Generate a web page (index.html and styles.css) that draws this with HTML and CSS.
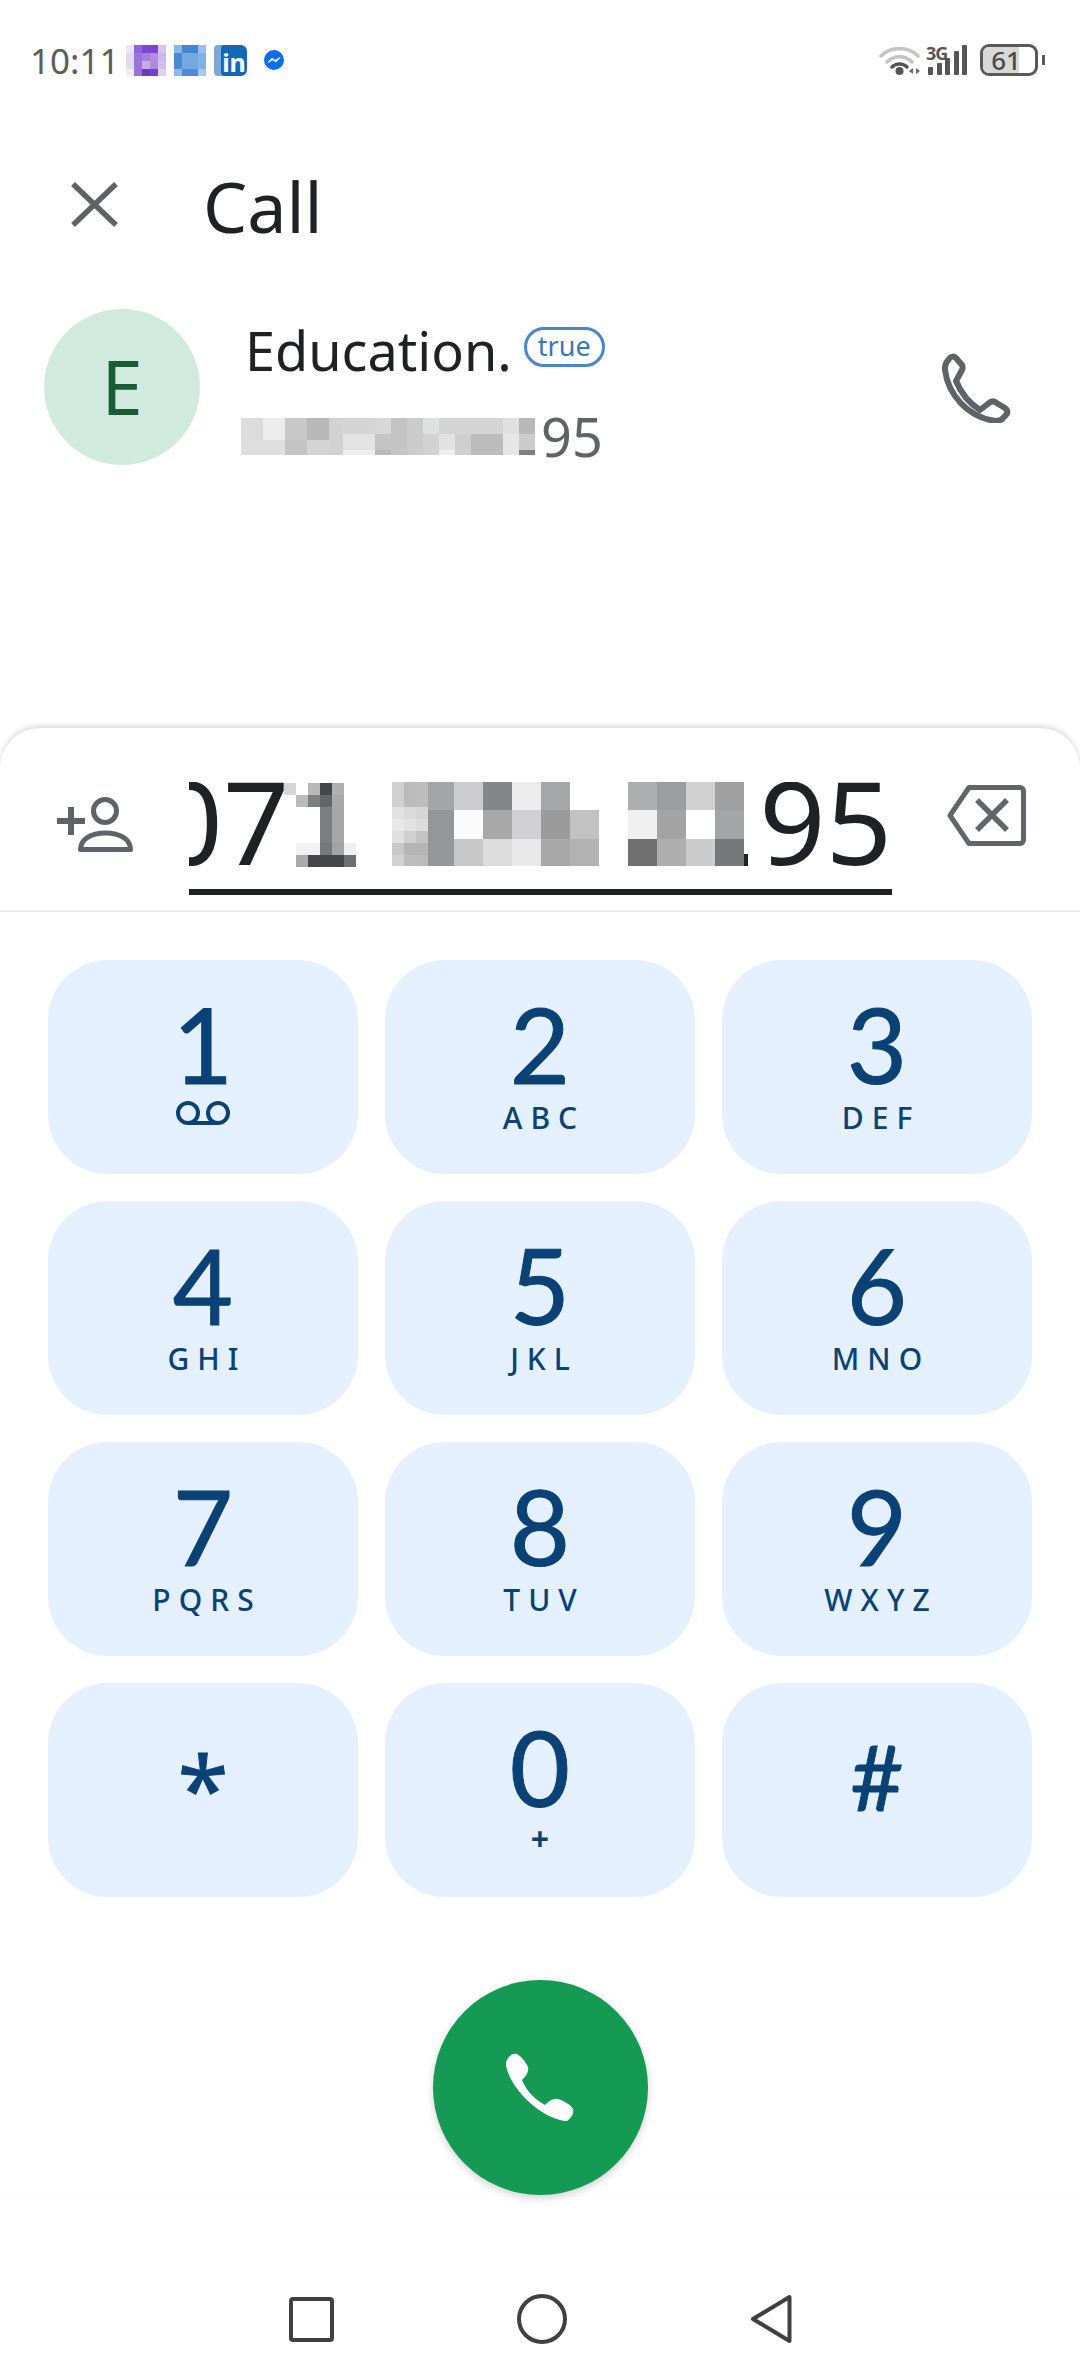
FILE: index.html
```html
<!DOCTYPE html>
<html lang="en">
<head>
  <meta charset="UTF-8" />
  <meta name="viewport" content="width=device-width, initial-scale=1.0" />
  <title>Call</title>
  <link rel="stylesheet" href="styles.css">
</head>
<body>
  <div class="status-bar">
    <span class="time">10:11</span>
    <svg class="notif" width="40" height="31" viewBox="0 0 40 31" shape-rendering="crispEdges">
      <rect x="0" y="0" width="8" height="8" fill="#ece6f6"/><rect x="8" y="0" width="8" height="8" fill="#8e62e0"/><rect x="16" y="0" width="16" height="8" fill="#7c45d8"/><rect x="32" y="0" width="8" height="8" fill="#d8c6ee"/>
      <rect x="0" y="8" width="8" height="8" fill="#e2d8f2"/><rect x="8" y="8" width="8" height="8" fill="#9a72dc"/><rect x="16" y="8" width="8" height="8" fill="#a37fdc"/><rect x="24" y="8" width="8" height="8" fill="#b08ce0"/><rect x="32" y="8" width="8" height="8" fill="#d0b8ea"/>
      <rect x="0" y="16" width="8" height="8" fill="#e2d8f2"/><rect x="8" y="16" width="8" height="8" fill="#9a74d8"/><rect x="16" y="16" width="8" height="8" fill="#c4ace8"/><rect x="24" y="16" width="8" height="8" fill="#ac8adc"/><rect x="32" y="16" width="8" height="8" fill="#d4bfec"/>
      <rect x="0" y="24" width="8" height="7" fill="#f2ecf8"/><rect x="8" y="24" width="8" height="7" fill="#9a72dc"/><rect x="16" y="24" width="8" height="7" fill="#6c38c0"/><rect x="24" y="24" width="8" height="7" fill="#7440c8"/><rect x="32" y="24" width="8" height="7" fill="#e0d0f2"/>
    </svg>
    <svg class="notif" width="32" height="31" viewBox="0 0 32 31" shape-rendering="crispEdges">
      <rect x="0" y="0" width="8" height="8" fill="#8fb4e0"/><rect x="8" y="0" width="16" height="8" fill="#3f86d8"/><rect x="24" y="0" width="8" height="8" fill="#9cc0ea"/>
      <rect x="0" y="8" width="8" height="16" fill="#4a8ad0"/><rect x="8" y="8" width="16" height="16" fill="#74a8de"/><rect x="24" y="8" width="8" height="16" fill="#84b0e2"/>
      <rect x="0" y="24" width="8" height="7" fill="#90b6e4"/><rect x="8" y="24" width="16" height="7" fill="#4a8cd8"/><rect x="24" y="24" width="8" height="7" fill="#a8c8ee"/>
    </svg>
    <div class="linkedin"><span>in</span></div>
    <svg class="messenger" width="20" height="20" viewBox="0 0 20 20">
      <circle cx="10" cy="10" r="10" fill="#0a6ee8"/>
      <path d="M4 12.5 8 8l3 2.4L16 7.5l-4 4.6-3-2.4z" fill="#fff" stroke="#fff" stroke-width="0.8" stroke-linejoin="round"/>
    </svg>

    <div class="status-right">
      <svg width="42" height="34" viewBox="0 0 42 34">
        <path d="M2 13C12 3 29 3 39 13" fill="none" stroke="#c4c4c4" stroke-width="3.5" stroke-linecap="round"/>
        <path d="M8 19C15 12 26 12 33 19" fill="none" stroke="#c4c4c4" stroke-width="3.5" stroke-linecap="round"/>
        <path d="M13 24C17 20 24 20 28 24" fill="none" stroke="#555" stroke-width="3.5" stroke-linecap="round"/>
        <circle cx="20.5" cy="28" r="4" fill="#555"/>
        <path d="M30 28l4-3v6zM41 28l-4-3v6z" fill="#666"/>
      </svg>
      <div class="signal">
        <span class="net">3G</span>
        <svg width="40" height="30" viewBox="0 0 40 30">
          <rect x="0" y="22" width="5" height="8" rx="1" fill="#555"/>
          <rect x="9" y="18" width="5" height="12" rx="1" fill="#555"/>
          <rect x="17" y="13" width="5" height="17" rx="1" fill="#555"/>
          <rect x="26" y="6" width="5" height="24" rx="1" fill="#555"/>
          <rect x="34" y="0" width="5" height="30" rx="1" fill="#555"/>
        </svg>
      </div>
      <div class="battery"><span class="battery-fill"></span><span class="battery-num">61</span></div>
      <span class="battery-nub"></span>
    </div>
  </div>

  <div class="top-bar">
    <svg width="47" height="45" viewBox="0 0 47 45">
      <path d="M2 2 45 43M45 2 2 43" fill="none" stroke="#5f6368" stroke-width="5.5"/>
    </svg>
    <h1>Call</h1>
  </div>

  <div class="contact">
    <div class="avatar">E</div>
    <div class="contact-text">
      <div class="name-row">
        <span class="name">Education.</span>
        <span class="tag">true</span>
      </div>
      <div class="number-row">
        <svg width="294" height="37" viewBox="0 0 294 37" shape-rendering="crispEdges">
          <rect x="0" y="0" width="22" height="22" fill="#dcdcdc"/><rect x="22" y="0" width="22" height="22" fill="#ececec"/><rect x="44" y="0" width="22" height="22" fill="#c8c8c8"/><rect x="66" y="0" width="22" height="22" fill="#b8b8b8"/><rect x="88" y="0" width="14" height="37" fill="#d2d2d2"/>
          <rect x="0" y="22" width="44" height="15" fill="#dedede"/><rect x="44" y="22" width="22" height="15" fill="#c4c4c4"/><rect x="66" y="22" width="22" height="15" fill="#d4d4d4"/>
          <rect x="102" y="0" width="32" height="16" fill="#d4d4d4"/><rect x="102" y="16" width="32" height="16" fill="#e3e3e3"/><rect x="102" y="32" width="32" height="5" fill="#eeeeee"/>
          <rect x="134" y="0" width="16" height="16" fill="#d8d8d8"/><rect x="134" y="16" width="16" height="16" fill="#c4c4c4"/><rect x="134" y="32" width="16" height="5" fill="#b8b8b8"/>
          <rect x="150" y="0" width="16" height="37" fill="#c4c4c4"/><rect x="166" y="0" width="16" height="37" fill="#cccccc"/>
          <rect x="182" y="0" width="16" height="16" fill="#dfe0e0"/><rect x="182" y="16" width="16" height="21" fill="#d2d2d2"/>
          <rect x="198" y="0" width="16" height="16" fill="#d4d4d4"/><rect x="198" y="16" width="16" height="16" fill="#e2e2e2"/><rect x="198" y="32" width="16" height="5" fill="#eeeeee"/>
          <rect x="214" y="0" width="16" height="16" fill="#d4d4d4"/><rect x="214" y="16" width="16" height="21" fill="#cfcfcf"/>
          <rect x="230" y="0" width="32" height="16" fill="#d4d4d4"/><rect x="230" y="16" width="32" height="21" fill="#bcbcbc"/>
          <rect x="262" y="0" width="16" height="16" fill="#e0e0e0"/><rect x="262" y="16" width="16" height="21" fill="#e6e6e6"/>
          <rect x="278" y="0" width="16" height="16" fill="#b8b8b8"/><rect x="278" y="16" width="16" height="16" fill="#cccccc"/><rect x="278" y="32" width="16" height="5" fill="#808080"/>
        </svg>
        <span class="number-end">95</span>
      </div>
    </div>
    <svg class="contact-call" width="72" height="72" viewBox="-3 -3 72 72">
      <path d="M6 5C8 2 11 2 13 4L19 11C20 13 20 14 19 16L13 27C18 39 26 49 37 56L46 49C48 47 50 47 52 48L62 54C65 56 65 59 63 61L60 64C58 67 55 67 52 67C24 63 5 40 2 16C1.5 12 3 8 6 5Z" fill="none" stroke="#5f6368" stroke-width="6" stroke-linejoin="round"/>
    </svg>
  </div>

  <div class="sheet">
    <div class="dial-row">
      <svg width="76" height="55" viewBox="0 0 76 55">
        <path d="M0 24H28M14 10V38" fill="none" stroke="#5f6368" stroke-width="6"/>
        <circle cx="48" cy="14" r="11.5" fill="none" stroke="#5f6368" stroke-width="5"/>
        <path d="M23.5 52.5C23.5 42 34 36 48.5 36S73.5 42 73.5 52.5Z" fill="none" stroke="#5f6368" stroke-width="5" stroke-linejoin="round"/>
      </svg>
      <div class="dial-field">
        <span class="dial-digits">07</span>
        <svg class="dial-mask-a" width="72" height="84" viewBox="0 0 72 84" shape-rendering="crispEdges">
          <rect x="0" y="0" width="12" height="12" fill="#d6d6d6"/><rect x="24" y="0" width="12" height="12" fill="#b8b8b8"/><rect x="36" y="0" width="12" height="12" fill="#45464a"/><rect x="48" y="0" width="12" height="12" fill="#b0b0b0"/>
          <rect x="12" y="12" width="12" height="12" fill="#bbbbbb"/><rect x="24" y="12" width="12" height="12" fill="#7e7f82"/><rect x="36" y="12" width="12" height="12" fill="#636467"/><rect x="48" y="12" width="12" height="12" fill="#a8a8a8"/>
          <rect x="36" y="24" width="12" height="36" fill="#7d7e80"/><rect x="48" y="24" width="12" height="36" fill="#a6a6a6"/>
          <rect x="12" y="60" width="24" height="12" fill="#f1f1f1"/><rect x="36" y="60" width="12" height="12" fill="#77787a"/><rect x="48" y="60" width="12" height="12" fill="#a3a3a3"/><rect x="60" y="60" width="12" height="12" fill="#f0f0f0"/>
          <rect x="12" y="72" width="12" height="12" fill="#aaaaaa"/><rect x="24" y="72" width="36" height="12" fill="#45464a"/><rect x="60" y="72" width="12" height="12" fill="#6e6f71"/>
        </svg>
        <svg class="dial-mask-b" width="356" height="85" viewBox="0 0 356 85" shape-rendering="crispEdges">
          <rect x="0" y="0" width="12" height="26" fill="#d0d0d0"/><rect x="12" y="0" width="12" height="26" fill="#bbbbbb"/><rect x="24" y="0" width="12" height="26" fill="#bdbdbd"/>
          <rect x="0" y="26" width="12" height="12" fill="#e2e2e2"/><rect x="12" y="26" width="12" height="12" fill="#dadada"/><rect x="24" y="26" width="12" height="12" fill="#d5d5d5"/>
          <rect x="0" y="38" width="12" height="12" fill="#e8e8e8"/><rect x="12" y="38" width="12" height="12" fill="#e2e2e2"/><rect x="24" y="38" width="12" height="12" fill="#dcdcdc"/>
          <rect x="0" y="50" width="12" height="12" fill="#e0e0e0"/><rect x="12" y="50" width="12" height="12" fill="#d0d0d0"/><rect x="24" y="50" width="12" height="12" fill="#c4c4c4"/>
          <rect x="0" y="62" width="12" height="12" fill="#c8c8c8"/><rect x="12" y="62" width="12" height="12" fill="#b5b5b5"/><rect x="24" y="62" width="12" height="12" fill="#b4b4b4"/>
          <rect x="0" y="74" width="12" height="11" fill="#d2d2d2"/><rect x="12" y="74" width="12" height="11" fill="#bdbdbd"/><rect x="24" y="74" width="12" height="11" fill="#bbbbbb"/>
          <rect x="36" y="0" width="26" height="29" fill="#a4a5a6"/><rect x="36" y="29" width="26" height="56" fill="#959697"/>
          <rect x="62" y="0" width="29" height="29" fill="#cdcdcf"/><rect x="91" y="0" width="29" height="29" fill="#858687"/><rect x="120" y="0" width="29" height="29" fill="#ededed"/><rect x="149" y="0" width="29" height="29" fill="#a5a6a7"/><rect x="236" y="0" width="29" height="29" fill="#adaeaf"/><rect x="265" y="0" width="29" height="29" fill="#9c9d9e"/><rect x="294" y="0" width="29" height="29" fill="#d0d0d0"/><rect x="323" y="0" width="29" height="29" fill="#9fa09f"/>
          <rect x="62" y="29" width="29" height="29" fill="#fbfbfb"/><rect x="91" y="29" width="29" height="29" fill="#a8a8a8"/><rect x="120" y="29" width="29" height="29" fill="#d0d0d2"/><rect x="149" y="29" width="29" height="29" fill="#9b9b9c"/><rect x="178" y="29" width="29" height="29" fill="#c2c2c3"/><rect x="236" y="29" width="29" height="29" fill="#f0f0f0"/><rect x="265" y="29" width="29" height="29" fill="#a3a3a4"/><rect x="323" y="29" width="29" height="29" fill="#a4a5a6"/>
          <rect x="62" y="58" width="29" height="27" fill="#c8c8c8"/><rect x="91" y="58" width="29" height="27" fill="#dcdcdc"/><rect x="120" y="58" width="29" height="27" fill="#e8e8e8"/><rect x="149" y="58" width="29" height="27" fill="#a8a8a8"/><rect x="178" y="58" width="29" height="27" fill="#b2b2b2"/><rect x="236" y="58" width="29" height="27" fill="#707071"/><rect x="265" y="58" width="29" height="27" fill="#aeaeaf"/><rect x="294" y="58" width="29" height="27" fill="#cccccc"/><rect x="323" y="58" width="29" height="27" fill="#767778"/>
          <rect x="352" y="73" width="4" height="12" fill="#222222"/>
        </svg>
        <span class="dial-digits">95</span>
      </div>
      <svg width="79" height="61" viewBox="0 0 79 61">
        <path d="M22 2.5H73A3.5 3.5 0 0 1 76.500 6V55A3.500 3.500 0 0 1 73 58.500H22L3 30.500Z" fill="none" stroke="#62666b" stroke-width="5" stroke-linejoin="round"/>
        <path d="M30 15 60 45M60 15 30 45" fill="none" stroke="#62666b" stroke-width="5.500"/>
      </svg>
    </div>

    <div class="keypad">
      <div class="key">
        <span class="digit">1</span>
        <svg class="vm" width="54" height="24" viewBox="0 0 54 24">
          <circle cx="12" cy="12" r="10" fill="none" stroke="#0b4275" stroke-width="4"/>
          <circle cx="42" cy="12" r="10" fill="none" stroke="#0b4275" stroke-width="4"/>
          <path d="M12 22H42" stroke="#0b4275" stroke-width="4"/>
        </svg>
      </div>
      <div class="key"><span class="digit">2</span><span class="letters">ABC</span></div>
      <div class="key"><span class="digit">3</span><span class="letters">DEF</span></div>
      <div class="key"><span class="digit">4</span><span class="letters">GHI</span></div>
      <div class="key"><span class="digit">5</span><span class="letters">JKL</span></div>
      <div class="key"><span class="digit">6</span><span class="letters">MNO</span></div>
      <div class="key"><span class="digit">7</span><span class="letters">PQRS</span></div>
      <div class="key"><span class="digit">8</span><span class="letters">TUV</span></div>
      <div class="key"><span class="digit">9</span><span class="letters">WXYZ</span></div>
      <div class="key"><span class="digit star">*</span></div>
      <div class="key"><span class="digit">0</span><span class="letters plus">+</span></div>
      <div class="key"><span class="digit hash">#</span></div>
    </div>

    <div class="call-wrap">
      <div class="call-btn">
        <svg width="68" height="69" viewBox="0 0 68 69">
          <path d="M3 4C5 1 8 0 11 1C15 3 20 9 22 14C23 19 20 23 16 27C20 37 28 46 39 52C43 48 47 45 52 46C58 48 65 52 67 56C68 61 65 65 61 68C40 68 6 40 0 13C-.5 9 1 6 3 4Z" fill="#fff"/>
        </svg>
      </div>
    </div>
  </div>

  <div class="nav-bar">
    <svg width="45" height="45" viewBox="0 0 45 45"><rect x="2" y="2" width="41" height="41" rx="2" fill="none" stroke="#404040" stroke-width="4"/></svg>
    <svg width="50" height="50" viewBox="0 0 50 50"><circle cx="25" cy="25" r="23" fill="none" stroke="#404040" stroke-width="4"/></svg>
    <svg width="42" height="50" viewBox="0 0 42 50"><path d="M39.500 3V47L3 25Z" fill="none" stroke="#404040" stroke-width="4" stroke-linejoin="round"/></svg>
  </div>
</body>
</html>
```

FILE: styles.css
```css
body {
  margin: 0;
  width: 1080px;
  height: 2376px;
  overflow: hidden;
  background-color: #fff;
  font-family: 'Noto Sans', sans-serif;
  color: #202124;
}

.status-bar {
  height: 120px;
  display: flex;
  align-items: center;
  padding: 0 30px;
  box-sizing: border-box;
}

.time {
  font-size: 35px;
  color: #5c5c5c;
  width: 96px;
}

.notif {
  margin-right: 8px;
}

.linkedin {
  width: 26px;
  height: 31px;
  margin-left: 7px;
  border-radius: 4px 6px 6px 4px;
  background-color: #1268b8;
  color: #fff;
  font-size: 25px;
  font-weight: bold;
  line-height: 34px;
  text-align: center;
  box-shadow: -7px 0 0 #7ea8d4;
}

.messenger {
  margin-left: 17px;
}

.status-right {
  margin-left: auto;
  display: flex;
  align-items: center;
  margin-right: 5px;
}

.signal {
  position: relative;
  margin-left: 7px;
  width: 42px;
  height: 30px;
  margin-top: -1px;
}

.net {
  position: absolute;
  left: -2px;
  top: 0;
  font-size: 18px;
  font-weight: bold;
  letter-spacing: -1px;
  line-height: 16px;
  color: #555;
}

.battery {
  position: relative;
  width: 58px;
  height: 32px;
  margin-left: 10px;
  border: 3px solid #5a5a5a;
  border-radius: 9px;
  box-sizing: border-box;
  text-align: center;
}

.battery-fill {
  position: absolute;
  left: 0;
  top: 0;
  bottom: 0;
  width: 70%;
  border-radius: 6px 0 0 6px;
  background-color: #d8d8d8;
}

.battery-num {
  position: relative;
  font-size: 26px;
  line-height: 26px;
  font-weight: 500;
  color: #4a4a4a;
  display: block;
  margin-right: 6px;
}

.battery-nub {
  width: 3px;
  height: 10px;
  margin-left: 4px;
  background-color: #5a5a5a;
}

.top-bar {
  height: 168px;
  display: flex;
  align-items: center;
  padding-left: 71px;
  gap: 85px;
  box-sizing: border-box;
}

.top-bar h1 {
  margin: 4px 0 0;
  font-size: 70px;
  font-weight: 400;
}

.contact {
  display: flex;
  align-items: center;
  margin-top: 20px;
  padding: 0 71px 0 44px;
  height: 157px;
}

.avatar {
  width: 156px;
  height: 156px;
  border-radius: 50%;
  background-color: #d0ebdd;
  color: #1a5c36;
  font-size: 74px;
  display: flex;
  align-items: center;
  justify-content: center;
  flex-shrink: 0;
}

.contact-text {
  margin-left: 41px;
}

.name-row {
  display: flex;
  align-items: flex-start;
  height: 76px;
}

.name {
  font-size: 54px;
  line-height: 76px;
  margin-left: 4px;
}

.tag {
  margin: 15px 0 0 12px;
  height: 40px;
  width: 81px;
  box-sizing: border-box;
  border: 3px solid #4a86d0;
  border-radius: 20px;
  color: #3a76b8;
  font-size: 27px;
  line-height: 32px;
  text-align: center;
}

.number-row {
  display: flex;
  align-items: center;
  gap: 6px;
  height: 50px;
  margin-top: 23px;
}

.number-end {
  font-size: 54px;
  line-height: 50px;
  color: #5f6368;
}

.contact-call {
  margin-left: auto;
  margin-right: -3px;
}

.sheet {
  margin-top: 263px;
  background-color: #fff;
  border-radius: 40px 40px 0 0;
  box-shadow: 0 -3px 5px rgba(0, 0, 0, 0.13);
}

.dial-row {
  height: 184px;
  box-sizing: border-box;
  border-bottom: 2px solid #ececec;
  display: flex;
  align-items: flex-start;
  padding: 69px 0 0 57px;
}

.dial-row > svg:last-child {
  margin: -12px 0 0 55px;
}

.dial-row > svg:first-child {
  margin-right: 56px;
}

.dial-field {
  width: 703px;
  height: 107px;
  margin-top: -15px;
  border-bottom: 6px solid #202124;
  display: flex;
  justify-content: flex-end;
  align-items: flex-start;
  overflow: hidden;
  flex-shrink: 0;
}

.dial-digits {
  font-size: 116px;
  line-height: 76px;
  flex-shrink: 0;
}

.dial-mask-a {
  flex-shrink: 0;
  margin: 1px 36px 0 -5px;
}

.dial-mask-b {
  flex-shrink: 0;
  margin: -1px 11px 0 0;
}

.keypad {
  display: grid;
  grid-template-columns: repeat(3, 310px);
  grid-auto-rows: 214px;
  column-gap: 27px;
  row-gap: 27px;
  padding: 48px 48px 0;
}

.key {
  background-color: #e5f0fe;
  border-radius: 60px;
  display: flex;
  flex-direction: column;
  align-items: center;
  color: #0b4275;
  font-family: 'Lato', sans-serif;
}

.digit {
  font-size: 104px;
  line-height: 76px;
  margin-top: 46px;
  -webkit-text-stroke: 1px #0b4275;
}

.star {
  font-family: 'Noto Sans', sans-serif;
  font-size: 92px;
  line-height: 92px;
  margin-top: 59px;
}

.hash {
  font-size: 92px;
  line-height: 92px;
  margin-top: 47px;
}

.letters {
  font-family: 'Noto Sans', sans-serif;
  font-size: 30px;
  line-height: 36px;
  margin-top: 18px;
  letter-spacing: 8px;
  font-weight: 500;
  margin-right: -8px;
}

.plus {
  margin-top: 16px;
  font-size: 32px;
  font-weight: bold;
}

.vm {
  margin-top: 19px;
}

.call-wrap {
  display: flex;
  justify-content: center;
  margin-top: 83px;
}

.call-btn {
  width: 215px;
  height: 215px;
  border-radius: 50%;
  background-color: #159a54;
  box-shadow: 0 3px 8px rgba(0, 0, 0, 0.18);
  display: flex;
  align-items: center;
  justify-content: center;
}

.nav-bar {
  display: flex;
  justify-content: center;
  align-items: center;
  gap: 183px;
  margin-top: 99px;
}
```
